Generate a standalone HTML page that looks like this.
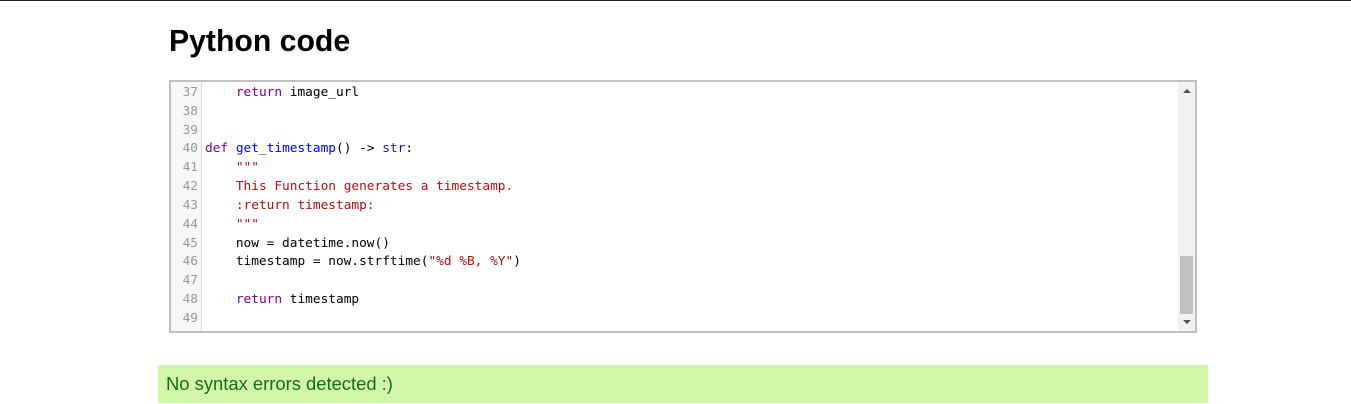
<!DOCTYPE html><html><head><style>
body{margin:0;width:1351px;height:404px;background:#fff;font-family:"Liberation Sans",sans-serif;overflow:hidden;position:relative}
.top{position:absolute;left:0;top:0;width:1351px;height:1px;background:#222}
h1{position:absolute;left:169px;top:25px;margin:0;font-size:30.2px;font-weight:bold;color:#000}
.box{position:absolute;left:169px;top:80px;width:1024px;height:249px;border:2px solid #c0c0c0;background:#fff;overflow:hidden}
.gut{position:absolute;left:0;top:0;width:30px;height:100%;background:#f7f7f7;border-right:1px solid #ddd}
.code{position:absolute;left:0;top:2px;font-family:"DejaVu Sans Mono",monospace;font-size:12.8px;line-height:18.83px;white-space:pre}
.ln{display:inline-block;width:27px;text-align:right;color:#999;margin-right:7px}
.k{color:#708}.d{color:#00f}.s{color:#a11}.b{color:#30a}
.sb{position:absolute;right:0;top:0;width:17px;height:100%;background:#f1f1f1}
.th{position:absolute;left:2px;top:174px;width:13px;height:58px;background:#c1c1c1}
.up,.dn{position:absolute;left:5px;width:0;height:0;border-left:4px solid transparent;border-right:4px solid transparent}
.up{top:7px;border-bottom:4px solid #505050}.dn{bottom:7px;border-top:4px solid #505050}
.ok{position:absolute;left:158px;top:365px;width:1050px;height:38px;background:#d1f5a9;color:#1a6b1a;font-size:18.4px;line-height:38px;padding-left:8px;box-sizing:border-box}
</style></head><body>
<div class="top"></div>
<h1>Python code</h1>
<div class="box"><div class="gut"></div>
<div class="code"><span class="ln">37</span>    <span class="k">return</span> image_url
<span class="ln">38</span>
<span class="ln">39</span>
<span class="ln">40</span><span class="k">def</span> <span class="d">get_timestamp</span>() -&gt; <span class="b">str</span>:
<span class="ln">41</span>    <span class="s">"""</span>
<span class="ln">42</span>    <span class="s">This Function generates a timestamp.</span>
<span class="ln">43</span>    <span class="s">:return timestamp:</span>
<span class="ln">44</span>    <span class="s">"""</span>
<span class="ln">45</span>    now = datetime.now()
<span class="ln">46</span>    timestamp = now.strftime(<span class="s">"%d %B, %Y"</span>)
<span class="ln">47</span>
<span class="ln">48</span>    <span class="k">return</span> timestamp
<span class="ln">49</span></div>
<div class="sb"><div class="up"></div><div class="th"></div><div class="dn"></div></div>
</div>
<div class="ok">No syntax errors detected :)</div>
</body></html>
